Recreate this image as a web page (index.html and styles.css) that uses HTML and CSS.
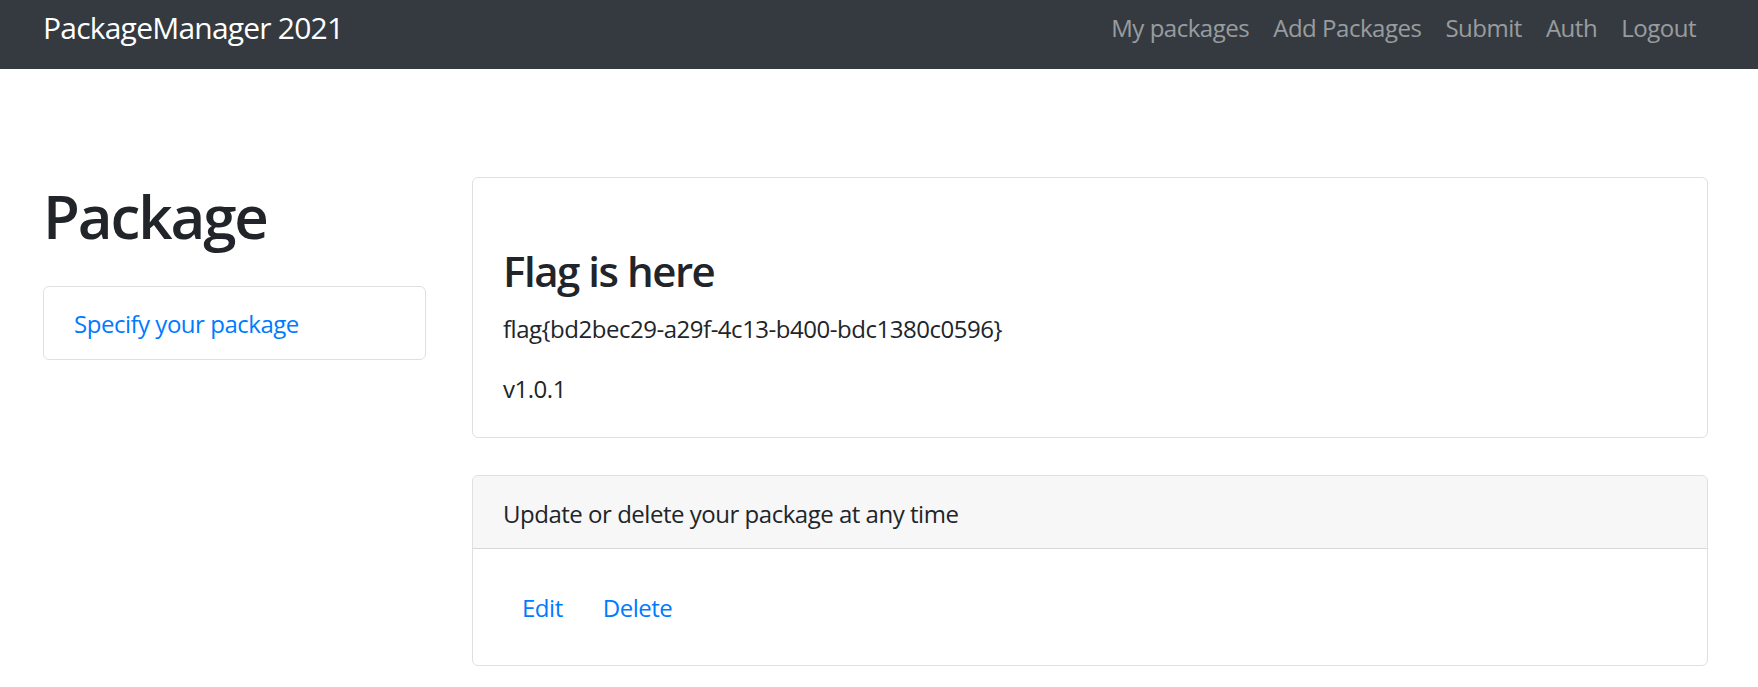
FILE: index.html
```html
<!DOCTYPE html>
<html lang="en">
<head>
<meta charset="utf-8">
<title>PackageManager 2021</title>
<link rel="stylesheet" href="styles.css">
</head>
<body>
<nav class="navbar">
  <a class="brand" href="#">PackageManager 2021</a>
  <ul class="nav">
    <li><a class="nav-link" href="#">My packages</a></li>
    <li><a class="nav-link" href="#">Add Packages</a></li>
    <li><a class="nav-link" href="#">Submit</a></li>
    <li><a class="nav-link" href="#">Auth</a></li>
    <li><a class="nav-link" href="#">Logout</a></li>
  </ul>
</nav>
<main class="page">
  <aside class="side">
    <h1 class="page-title">Package</h1>
    <div class="list-group">
      <a class="list-item" href="#">Specify your package</a>
    </div>
  </aside>
  <section class="content">
    <div class="card">
      <div class="card-body">
        <h3 class="card-title">Flag is here</h3>
        <p class="card-text">flag{bd2bec29-a29f-4c13-b400-bdc1380c0596}</p>
        <p class="card-text last">v1.0.1</p>
      </div>
    </div>
    <div class="card card-actions">
      <div class="card-header">Update or delete your package at any time</div>
      <div class="card-body actions">
        <a class="btn-link" href="#">Edit</a>
        <a class="btn-link" href="#">Delete</a>
      </div>
    </div>
  </section>
</main>
</body>
</html>
```
FILE: styles.css
```css
* { box-sizing: border-box; }

body {
  margin: 0;
  font-family: "Segoe UI", "Open Sans", "Noto Sans", sans-serif;
  font-size: 24px;
  line-height: 1.5;
  letter-spacing: -0.02em;
  color: #212529;
  background: #fff;
}

a { text-decoration: none; }

.navbar {
  display: flex;
  justify-content: space-between;
  align-items: flex-start;
  height: 69px;
  padding: 0 50px 0 43px;
  background: #343a40;
}

.brand {
  font-size: 30px;
  line-height: 45px;
  letter-spacing: -0.026em;
  padding-top: 5px;
  color: #fff;
  white-space: nowrap;
}

.nav {
  display: flex;
  list-style: none;
  margin: 0;
  padding: 0;
}

.nav-link {
  display: block;
  padding: 10px 12px 0;
  line-height: 36px;
  color: rgba(255, 255, 255, 0.5);
}

.page {
  display: flex;
  gap: 46px;
  padding: 108px 50px 0 43px;
}

.side {
  width: 383px;
  flex: none;
}

.page-title {
  margin: 3px 0 0;
  font-size: 60px;
  font-weight: 600;
  letter-spacing: -0.035em;
  line-height: 72px;
}

.list-group {
  margin-top: 34px;
  border: 1px solid rgba(0, 0, 0, 0.125);
  border-radius: 6px;
}

.list-item {
  display: block;
  padding: 19px 30px 17px;
  line-height: 36px;
  color: #007bff;
}

.content {
  flex: 1;
  min-width: 0;
}

.card {
  border: 1px solid rgba(0, 0, 0, 0.125);
  border-radius: 6px;
  overflow: hidden;
}

.card-body {
  padding: 30px;
}

.card-title {
  margin: 38px 0 15px;
  font-size: 42px;
  font-weight: 600;
  letter-spacing: -0.035em;
  line-height: 1.2;
}

.card-text {
  margin: 0 0 24px;
}

.card-text.last {
  margin-bottom: 0;
}

.card-actions {
  margin-top: 37px;
}

.card-header {
  padding: 20px 30px 16px;
  line-height: 36px;
  background: rgba(0, 0, 0, 0.03);
  border-bottom: 1px solid rgba(0, 0, 0, 0.125);
}

.actions {
  display: flex;
  gap: 2px;
  padding-top: 31px;
  padding-bottom: 29px;
}

.btn-link {
  display: inline-block;
  padding: 9px 18px;
  border: 1px solid transparent;
  line-height: 36px;
  color: #007bff;
}
```
